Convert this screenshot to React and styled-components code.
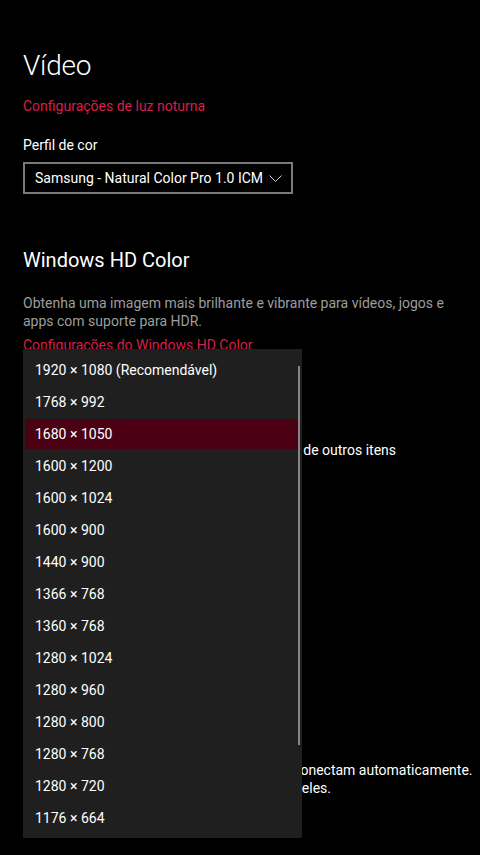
import styled, { createGlobalStyle } from "styled-components";

const Global = createGlobalStyle`
  html, body {
    margin: 0;
    background: #000;
  }
  body {
    font-family: Roboto, "Liberation Sans", sans-serif;
    color: #fff;
    font-size: 14px;
  }
`;

const resolutions = [
  "1920 × 1080 (Recomendável)",
  "1768 × 992",
  "1680 × 1050",
  "1600 × 1200",
  "1600 × 1024",
  "1600 × 900",
  "1440 × 900",
  "1366 × 768",
  "1360 × 768",
  "1280 × 1024",
  "1280 × 960",
  "1280 × 800",
  "1280 × 768",
  "1280 × 720",
  "1176 × 664",
];

export default function App() {
  return (
    <Page>
      <Global />
      <Title>Vídeo</Title>
      <Link $top={12}>Configurações de luz noturna</Link>
      <Label $top={19}>Perfil de cor</Label>
      <Combo $top={7} $width={270}>
        <span>Samsung - Natural Color Pro 1.0 ICM</span>
        <Chevron />
      </Combo>

      <Heading $top={52}>Windows HD Color</Heading>
      <Description $top={20} $width={440}>
        Obtenha uma imagem mais brilhante e vibrante para vídeos, jogos e apps com suporte para HDR.
      </Description>
      <Link $top={5}>Configurações do Windows HD Color</Link>

      {/* Escala e layout: covered by the open resolution list */}
      <Label $top={85}>Alterar o tamanho do texto, dos aplicativos e de outros itens</Label>

      {/* Vários vídeos */}
      <Description $top={301} $width={457} $light>
        Os monitores mais antigos nem sempre se conectam automaticamente. Selecione Detectar para tentar se conectar a eles.
      </Description>

      <Popup>
        {resolutions.map((r, i) => (
          <Option key={r} $selected={i === 2}>
            {r}
          </Option>
        ))}
        <ScrollThumb />
      </Popup>
    </Page>
  );
}

function Chevron() {
  return (
    <ChevronIcon width="13" height="7" viewBox="0 0 13 7">
      <path d="M0.5 0.5 L6.5 6.5 L12.5 0.5" fill="none" stroke="#cfcfcf" strokeWidth="1" />
    </ChevronIcon>
  );
}

const Page = styled.div`
  position: relative;
  min-height: 855px;
  box-sizing: border-box;
  padding: 48px 0 0 23px;
  display: flex;
  flex-direction: column;
  align-items: flex-start;
  overflow: hidden;
`;

const Title = styled.h1`
  margin: 0;
  font-size: 28px;
  line-height: 36px;
  font-weight: 300;
  letter-spacing: -0.2px;
`;

const Heading = styled.h2`
  margin: ${(p) => p.$top}px 0 0;
  font-size: 20px;
  line-height: 28px;
  font-weight: 400;
`;

const Link = styled.a`
  margin-top: ${(p) => p.$top}px;
  font-size: 14px;
  line-height: 20px;
  color: #d81e4b;
  cursor: pointer;
`;

const Label = styled.div`
  margin-top: ${(p) => p.$top}px;
  font-size: 14px;
  line-height: 20px;
  color: #fff;
`;

const Description = styled.p`
  margin: ${(p) => p.$top}px 0 0;
  width: ${(p) => p.$width}px;
  font-size: 14px;
  line-height: 18px;
  color: ${(p) => (p.$light ? "#fff" : "#9d9d9d")};
`;

const Combo = styled.div`
  margin-top: ${(p) => p.$top}px;
  width: ${(p) => p.$width}px;
  height: 32px;
  box-sizing: border-box;
  border: 2px solid #7a7a7a;
  padding: 4px 9px 4px 10px;
  display: flex;
  align-items: center;
  justify-content: space-between;
  font-size: 14px;
  line-height: 20px;
`;

const ChevronIcon = styled.svg`
  display: block;
  margin-top: 1px;
`;

const Popup = styled.div`
  position: absolute;
  left: 23px;
  top: 349px;
  width: 279px;
  height: 489px;
  box-sizing: border-box;
  padding-top: 4px;
  background: #1f1f1f;
  overflow: hidden;
`;

const Option = styled.div`
  margin: 2px 2px 0;
  height: 30px;
  line-height: 30px;
  padding-left: 10px;
  font-size: 14px;
  color: #fff;
  background: ${(p) => (p.$selected ? "#4b0014" : "transparent")};
`;

const ScrollThumb = styled.div`
  position: absolute;
  left: 275px;
  top: 17px;
  width: 2px;
  height: 379px;
  background: #858585;
`;
